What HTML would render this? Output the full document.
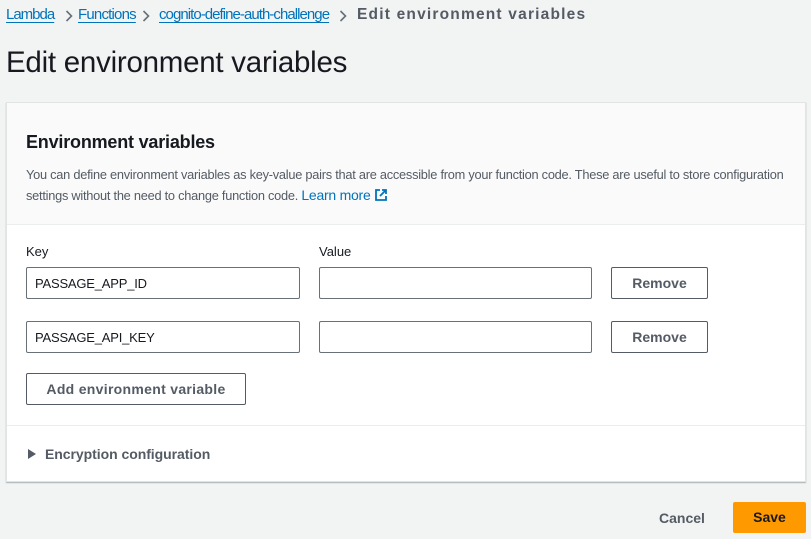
<!DOCTYPE html>
<html><head><meta charset="utf-8"><style>
*{margin:0;padding:0;box-sizing:border-box}
body{width:811px;height:539px;background:#f2f3f3;font-family:"Liberation Sans",sans-serif;position:relative;overflow:hidden;color:#16191f}
.a{position:absolute;white-space:nowrap}
.lnk{color:#0073bb;text-decoration:underline;text-underline-offset:3px}
.panel{position:absolute;left:6px;top:102px;width:800px;height:380px;background:#fff;border:1px solid #e1e4e4;box-shadow:0 1px 1px rgba(0,28,36,.3)}
.hdr{position:absolute;left:0;top:0;width:100%;height:122px;background:#fafafa;border-bottom:1px solid #eaeded}
.inp{position:absolute;height:32px;border:1px solid #687078;border-radius:2px;background:#fff;font-size:13px;padding:8px 8px;letter-spacing:-.2px}
.btn{position:absolute;height:32px;border:1px solid #545b64;border-radius:2px;background:#fff;font-size:14px;font-weight:bold;color:#545b64;text-align:center;line-height:30px}
.bc{position:absolute;top:6px;font-size:15px;white-space:nowrap}
.chev{position:absolute;top:10px}
</style></head><body>
<div class="bc lnk" style="left:6px;letter-spacing:-1px">Lambda</div>
<svg class="chev" style="left:65px" width="8" height="12" viewBox="0 0 8 12"><path d="M1.5 1l5 5-5 5" fill="none" stroke="#687078" stroke-width="1.6"/></svg>
<div class="bc lnk" style="left:78px;letter-spacing:-.8px">Functions</div>
<svg class="chev" style="left:142px" width="8" height="12" viewBox="0 0 8 12"><path d="M1.5 1l5 5-5 5" fill="none" stroke="#687078" stroke-width="1.6"/></svg>
<div class="bc lnk" style="left:159px;letter-spacing:-.95px">cognito-define-auth-challenge</div>
<svg class="chev" style="left:339px" width="8" height="12" viewBox="0 0 8 12"><path d="M1.5 1l5 5-5 5" fill="none" stroke="#687078" stroke-width="1.6"/></svg>
<div class="bc" style="left:357px;font-weight:bold;color:#545b64;font-size:15.5px;letter-spacing:1.2px">Edit environment variables</div>
<div class="a" style="left:6px;top:46px;font-size:29.5px;letter-spacing:-.25px">Edit environment variables</div>
<div class="panel">
<div class="hdr"></div>
<div class="a" style="left:19px;top:29px;font-size:18px;font-weight:bold;letter-spacing:-.2px">Environment variables</div>
<div class="a" style="left:19px;top:62px;font-size:12.8px;color:#545b64;letter-spacing:-.25px;line-height:20px">You can define environment variables as key-value pairs that are accessible from your function code. These are useful to store configuration<br>settings without the need to change function code. <span style="color:#0073bb;font-size:14px">Learn more <svg width="14" height="14" viewBox="0 0 14 14" style="vertical-align:-2px"><path d="M6 2H2v10h10V8M8 2h4v4M12 2L6 8" fill="none" stroke="#0073bb" stroke-width="1.8"/></svg></span></div>
<div class="a" style="left:19px;top:141px;font-size:13px">Key</div>
<div class="a" style="left:312px;top:141px;font-size:13px">Value</div>
<div class="inp" style="left:19px;top:164px;width:274px">PASSAGE_APP_ID</div>
<div class="inp" style="left:312px;top:164px;width:273px"></div>
<div class="btn" style="left:604px;top:164px;width:97px">Remove</div>
<div class="inp" style="left:19px;top:218px;width:274px">PASSAGE_API_KEY</div>
<div class="inp" style="left:312px;top:218px;width:273px"></div>
<div class="btn" style="left:604px;top:218px;width:97px">Remove</div>
<div class="btn" style="left:19px;top:270px;width:220px;letter-spacing:.3px">Add environment variable</div>
<div style="position:absolute;left:0;top:322px;width:100%;border-top:1px solid #eaeded"></div>
<svg class="a" style="left:21px;top:346px" width="8" height="10" viewBox="0 0 8 10"><path d="M0 0L8 5L0 10Z" fill="#545b64"/></svg>
<div class="a" style="left:38px;top:343px;font-size:14px;font-weight:bold;color:#545b64;letter-spacing:-.05px">Encryption configuration</div>
</div>
<div class="a" style="left:659px;top:510px;font-size:14px;font-weight:bold;color:#545b64">Cancel</div>
<div class="a" style="left:733px;top:502px;width:73px;height:31px;background:#ff9900;border-radius:2px;font-size:14px;font-weight:bold;text-align:center;line-height:31px">Save</div>
</body></html>
